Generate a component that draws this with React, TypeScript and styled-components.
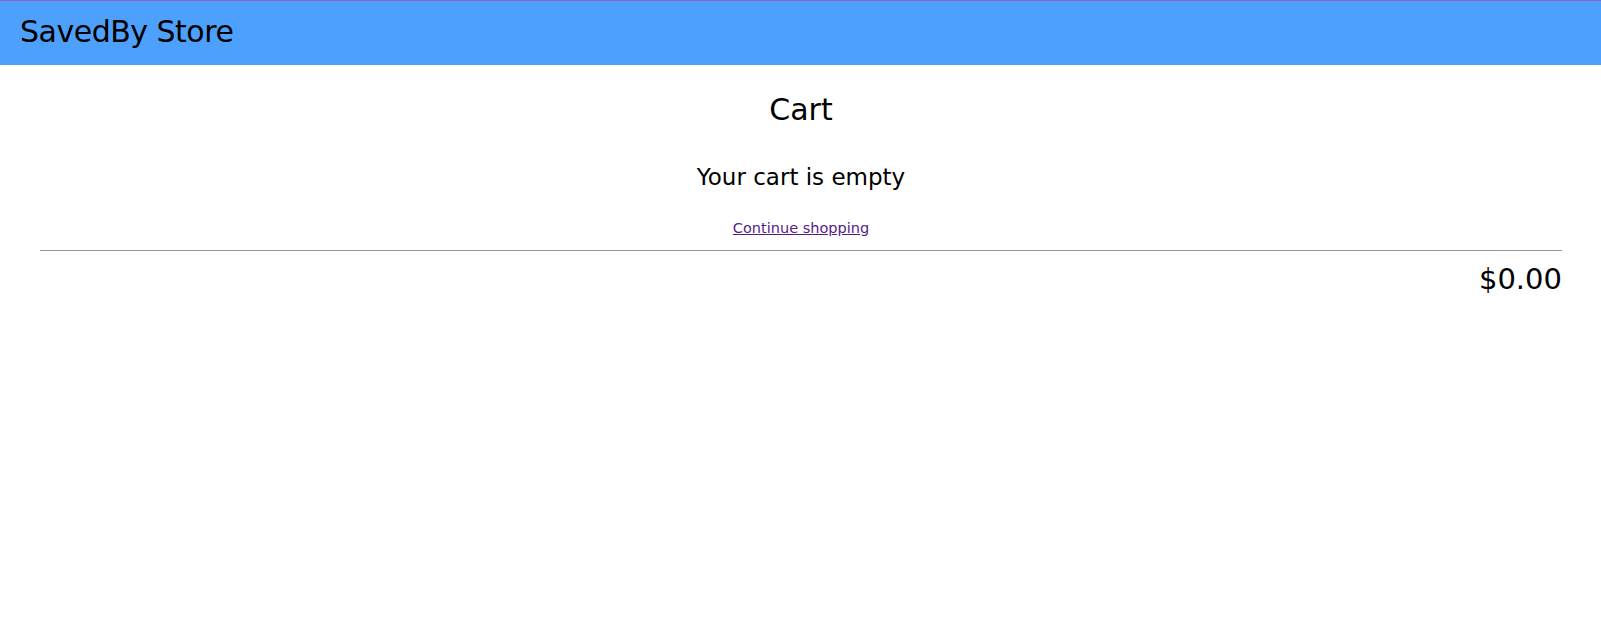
import React from "react";
import styled, { createGlobalStyle } from "styled-components";

const Global = createGlobalStyle`
  html, body { margin: 0; padding: 0; background: #fff; }
  body { font-family: "DejaVu Sans", "Liberation Sans", sans-serif; color: #000; }
`;

const Header = styled.header`
  height: 64px;
  box-sizing: content-box;
  border-top: 1px solid #8d5fcf;
  background: #4da1fd;
  display: flex;
  align-items: center;
  padding-left: 20px;
`;

const Brand = styled.div`
  font-size: 30px;
  letter-spacing: -0.5px;
  padding-bottom: 4px;
`;

const Main = styled.main`
  padding: 0 39px 0 40px;
  display: flex;
  flex-direction: column;
  align-items: center;
`;

const Title = styled.h1`
  margin: 25px 0 0;
  font-size: 30px;
  font-weight: normal;
  line-height: 40px;
`;

const Empty = styled.h2`
  margin: 32px 0 0;
  font-size: 23px;
  font-weight: normal;
  line-height: 30px;
`;

const Link = styled.a`
  margin-top: 26px;
  font-size: 14.5px;
  line-height: 20px;
  color: #551a8b;
  text-decoration: underline;
`;

const Rule = styled.hr`
  align-self: stretch;
  margin: 12px 0 0;
  border: 0;
  border-top: 1px solid #999;
`;

const Total = styled.div`
  align-self: stretch;
  text-align: right;
  font-size: 29px;
  line-height: 34px;
  margin-top: 11px;
`;

export default function App() {
  return (
    <>
      <Global />
      <Header>
        <Brand>SavedBy Store</Brand>
      </Header>
      <Main>
        <Title>Cart</Title>
        <Empty>Your cart is empty</Empty>
        <Link href="#">Continue shopping</Link>
        <Rule />
        <Total>$0.00</Total>
      </Main>
    </>
  );
}
